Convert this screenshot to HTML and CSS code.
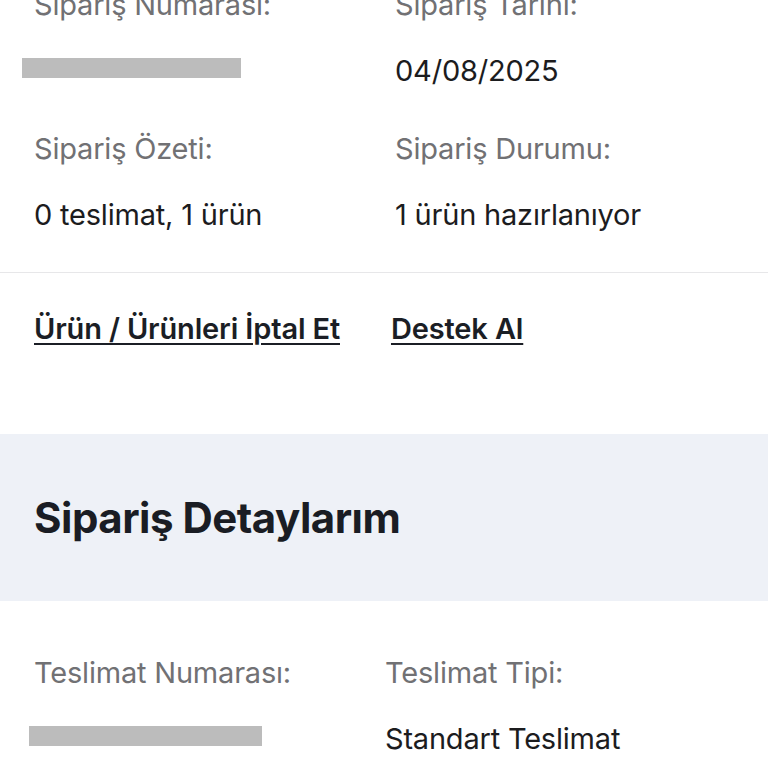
FILE: index.html
```html
<!DOCTYPE html>
<html lang="tr">
<head>
<meta charset="utf-8">
<link rel="stylesheet" href="styles.css">
</head>
<body>
<section class="summary">
  <div class="grid top-grid">
    <div class="cell">
      <div class="label">Sipariş Numarası:</div>
      <div class="value"><span class="redact r1"></span></div>
    </div>
    <div class="cell">
      <div class="label">Sipariş Tarihi:</div>
      <div class="value">04/08/2025</div>
    </div>
    <div class="cell">
      <div class="label">Sipariş Özeti:</div>
      <div class="value">0 teslimat, 1 ürün</div>
    </div>
    <div class="cell">
      <div class="label">Sipariş Durumu:</div>
      <div class="value">1 ürün hazırlanıyor</div>
    </div>
  </div>
</section>
<nav class="actions">
  <a class="link link-cancel" href="#">Ürün / Ürünleri İptal Et</a>
  <a class="link" href="#">Destek Al</a>
</nav>
<header class="band">
  <h2 class="band-title">Sipariş Detaylarım</h2>
</header>
<section class="details">
  <div class="grid detail-grid">
    <div class="cell">
      <div class="label">Teslimat Numarası:</div>
      <div class="value"><span class="redact r2"></span></div>
    </div>
    <div class="cell">
      <div class="label">Teslimat Tipi:</div>
      <div class="value">Standart Teslimat</div>
    </div>
  </div>
</section>
</body>
</html>
```

FILE: styles.css
```css
* { box-sizing: border-box; }
html, body { margin: 0; padding: 0; background: #ffffff; }
body {
  font-family: Inter, "Noto Sans", sans-serif;
  color: #1c1c1c;
  overflow: hidden;
  height: 768px;
}
.summary {
  margin-top: -13px;
  padding: 0 0 39px 34px;
  border-bottom: 1px solid #e7e7e9;
}
.grid {
  display: grid;
  row-gap: 42px;
}
.top-grid { grid-template-columns: 361px 1fr; }
.detail-grid { grid-template-columns: 351px 1fr; }
.cell {
  display: flex;
  flex-direction: column;
  gap: 30px;
}
.label {
  font-size: 29px;
  line-height: 36px;
  color: #717174;
  letter-spacing: -0.2px;
  white-space: nowrap;
}
.value {
  font-size: 29px;
  line-height: 36px;
  color: #1c1c1e;
  letter-spacing: -0.2px;
  white-space: nowrap;
}
.redact {
  display: block;
  background: #bcbcbc;
  height: 20px;
}
.r1 { width: 219px; margin: 5px 0 0 -12px; }
.r2 { width: 233px; margin: 5px 0 0 -5px; }
.actions {
  display: flex;
  gap: 51px;
  padding: 38px 0 0 34px;
  height: 161px;
}
.link {
  font-size: 29px;
  line-height: 36px;
  font-weight: 600;
  color: #1b1e25;
  text-decoration: underline;
  text-decoration-thickness: 2px;
  text-underline-offset: 4px;
  letter-spacing: -0.15px;
  white-space: nowrap;
}
.band {
  background: #eef1f7;
  height: 167px;
  display: flex;
  align-items: center;
  padding-left: 34px;
}
.band-title {
  margin: 0;
  font-size: 42px;
  line-height: 48px;
  font-weight: 700;
  color: #1a1d24;
  letter-spacing: -0.5px;
}
.details {
  padding: 54px 0 0 34px;
}
```
